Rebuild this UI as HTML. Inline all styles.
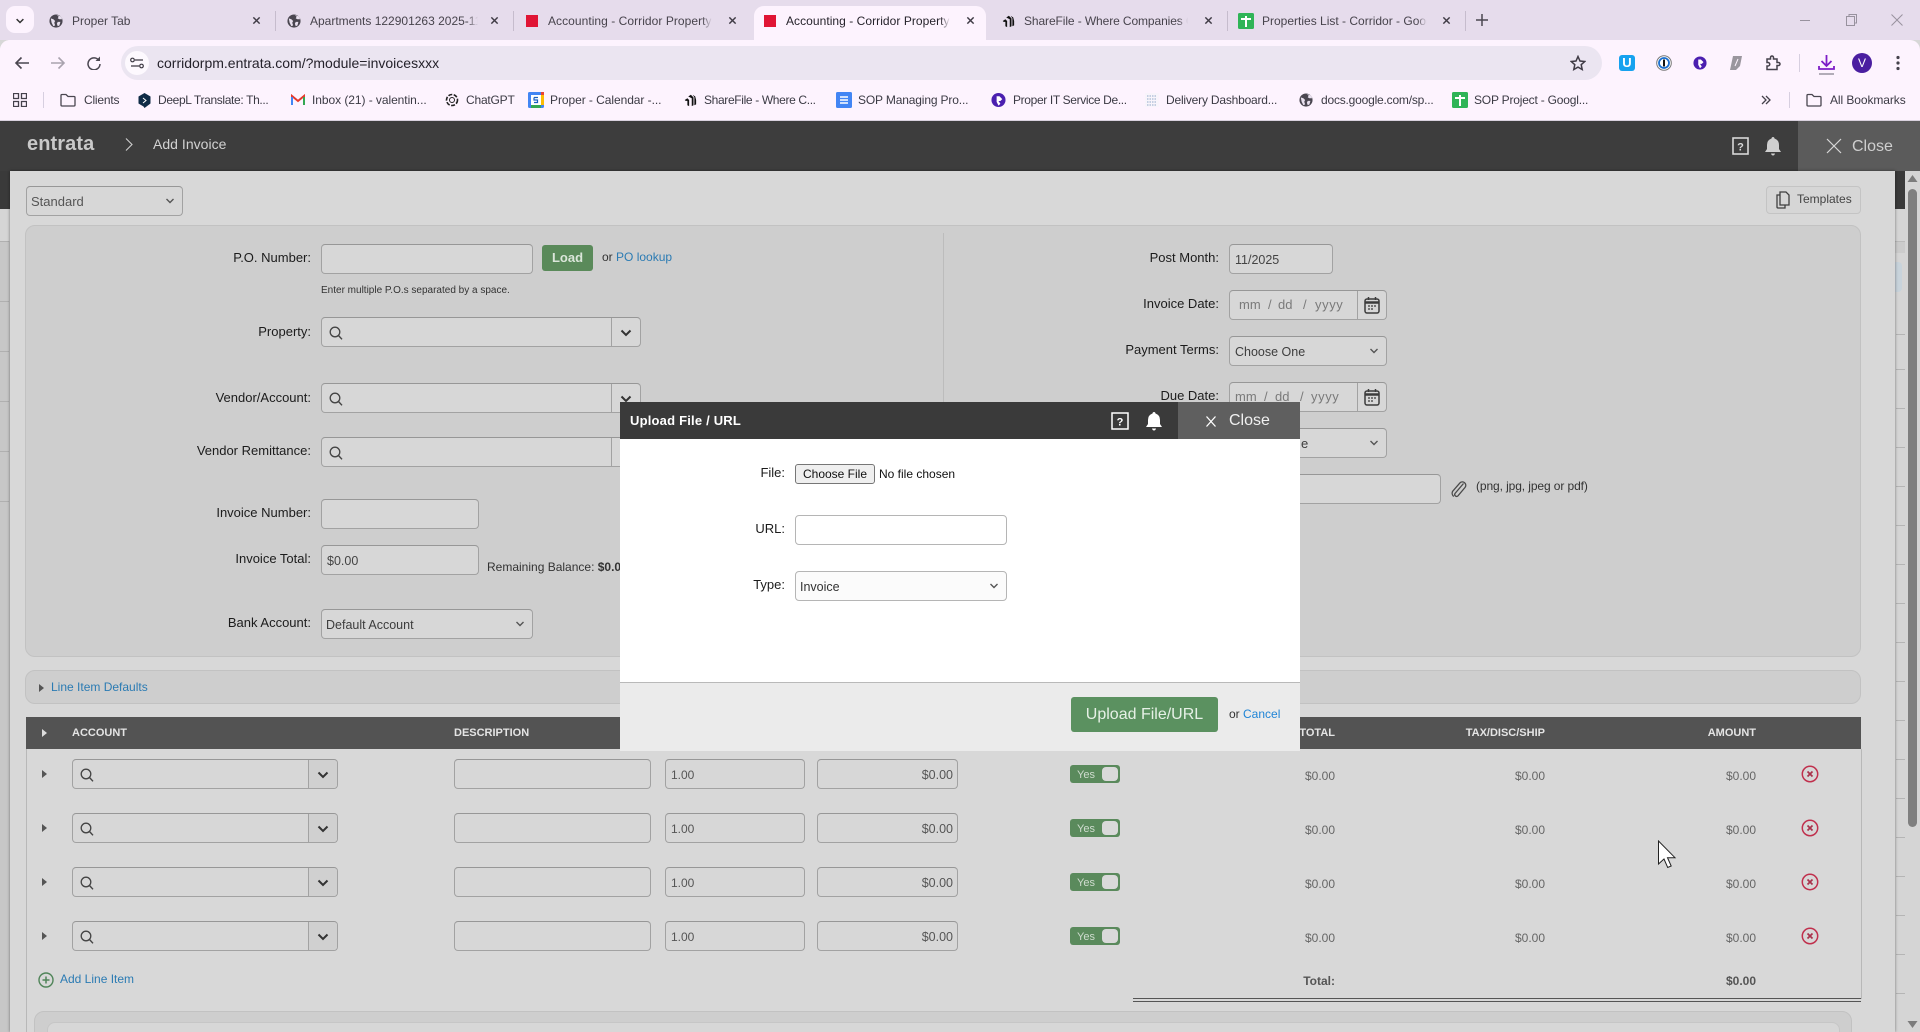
<!DOCTYPE html>
<html lang="en"><head><meta charset="utf-8"><title>Add Invoice</title>
<style>
html,body{margin:0;padding:0;width:1920px;height:1032px;overflow:hidden;background:#d7d7d7}
body{position:relative;font-family:"Liberation Sans",Arial,sans-serif;font-size:13px;color:#222}
div,span.a,svg.a{position:absolute}
.t{line-height:16px;white-space:nowrap}
.l{position:absolute;left:0;margin-top:1px;text-align:right;line-height:16px;color:#1c1c1c;white-space:nowrap}
.i{box-sizing:border-box;height:30px;background:#d7d7d7;border:1px solid #a2a2a2;border-top-color:#979797;border-radius:4px}
.v{position:absolute;line-height:30px;top:-1px;left:6px;color:#444;white-space:nowrap}
.s{background:#d2d2d2}
.tab{line-height:16px;top:12.500px;font-size:12px;color:#47434c;white-space:nowrap;overflow:hidden;-webkit-mask-image:linear-gradient(90deg,#000 94%,transparent)}
.bm{top:92px;line-height:16px;font-size:12px;color:#3b3a44;white-space:nowrap}
.sep{width:1px;background:#c6bccd;top:11px;height:20px}
.th{top:725px;line-height:16px;font-size:11px;font-weight:bold;color:#e4e4e4;white-space:nowrap}
.am{line-height:16px;font-size:12px;color:#666;text-align:right;white-space:nowrap}
.tg{left:1070px;width:50px;height:18px;background:#5a8a5c;border-radius:3px}
.tg b{position:absolute;left:32px;top:2px;width:16px;height:14px;background:#d9d9d9;border-radius:4px}
.tg span{position:absolute;left:7px;top:2px;line-height:16px;font-size:11px;color:#cfdccf}
.bl{left:1896px;width:9px;height:1px;background:#b5b5b5}
.bll{left:0;width:9px;height:1px;background:#b0b0b0}
.d{line-height:16px;white-space:nowrap;color:#7a7a7a;font-size:13px}
a{color:#2b7bb3;text-decoration:none}
</style></head><body>
<svg width="0" height="0" style="position:absolute"><defs>
<symbol id="glb" viewBox="0 0 16 16"><circle cx="8" cy="8" r="7.500" fill="#4a4650"/><path d="M2 5l3 1 2 2-1 2 1 3-2 1-2-4zM9 1l2 2-1 2 2 1 3 0-1-3zM10 9l3 0-1 4-2 1-1-3z" fill="#e8e0ee"/></symbol>
<symbol id="x" viewBox="0 0 10 10"><path d="M1.500 1.500l7 7M8.500 1.500l-7 7" stroke="#3f3b45" stroke-width="1.600" fill="none"/></symbol>
<symbol id="sh" viewBox="0 0 16 16"><path d="M2 8l3-2 2 2v7l-2-1V9L3 9zM6 4l3-2 3 3v9l-2 1V6L8 5zM11 2l3 2 1 4v5l-2 1V5z" fill="#111"/></symbol>
<symbol id="gs" viewBox="0 0 16 16"><rect width="16" height="16" rx="1.500" fill="#2fb457"/><path d="M3 6h10M8 3v11" stroke="#fff" stroke-width="2" fill="none"/></symbol>
<symbol id="gd" viewBox="0 0 16 16"><path d="M2 0h9l4 4v12H2z" fill="#4285f4"/><path d="M5 6h7M5 9h7M5 12h7" stroke="#fff" stroke-width="1.500"/></symbol>
<symbol id="pr" viewBox="0 0 16 16"><circle cx="8" cy="8" r="7.500" fill="#4b1fb0"/><path d="M6 4h3l3 3-2 2h-2l2 3-2 2-2-4z" fill="#fff"/></symbol>
<symbol id="fld" viewBox="0 0 16 14"><path d="M1 2.500q0-1 1-1h4l2 2h6q1 0 1 1v7.500q0 1-1 1H2q-1 0-1-1z" fill="none" stroke="#4a4650" stroke-width="1.300"/></symbol>
<symbol id="chs" viewBox="0 0 10 6"><path d="M1.500 1l3.500 3.500L8.500 1" fill="none" stroke="#555" stroke-width="1.400"/></symbol>
<symbol id="chb" viewBox="0 0 12 8"><path d="M1.500 1.500L6 6l4.500-4.500" fill="none" stroke="#333" stroke-width="2"/></symbol>
<symbol id="q" viewBox="0 0 14 14"><circle cx="6" cy="6" r="4.800" fill="none" stroke="#444" stroke-width="1.300"/><path d="M9.500 9.500l3.500 3.800" stroke="#444" stroke-width="1.400"/></symbol>
<symbol id="cal" viewBox="0 0 16 18"><rect x="1" y="3" width="14" height="14" rx="2" fill="none" stroke="#3c3c3c" stroke-width="1.500"/><path d="M1 6.500h14" stroke="#3c3c3c" stroke-width="2.500"/><path d="M4.500 1v3M11.500 1v3" stroke="#3c3c3c" stroke-width="1.500"/><path d="M4 10h2M7 10h2M10 10h2M4 13h2M7 13h2" stroke="#3c3c3c" stroke-width="1.300"/></symbol>
<symbol id="bell" viewBox="0 0 18 20"><path d="M9 1q1.300 0 1.500 1.500Q15 4 15 9v4l2 3H1l2-3V9q0-5 4.500-6.500Q7.700 1 9 1z" fill="currentColor"/><path d="M7 17.500h4q-.5 2-2 2t-2-2z" fill="currentColor"/></symbol>
<symbol id="tri" viewBox="0 0 5 8"><path d="M0 0l5 4-5 4z" fill="currentColor"/></symbol>
<symbol id="rx" viewBox="0 0 18 18"><circle cx="9" cy="9" r="7.700" fill="none" stroke="#c0304d" stroke-width="1.500"/><path d="M6.500 6.500l5 5M11.500 6.500l-5 5" stroke="#a8324b" stroke-width="1.700"/></symbol>
</defs></svg>

<!-- tab strip -->
<div style="left:0;top:0;width:1920px;height:40px;background:#e6dcec"></div>
<div style="left:6px;top:6px;width:28px;height:27px;background:#fdf3fe;border-radius:9px"></div>
<svg class="a" style="left:15px;top:18px" width="10" height="6"><use href="#chb"/></svg>
<svg class="a" style="left:49px;top:14px" width="14" height="14"><use href="#glb"/></svg>
<div class="tab" style="left:72px;width:100px">Proper Tab</div>
<svg class="a" style="left:252px;top:16px" width="9" height="9"><use href="#x"/></svg>
<div class="sep" style="left:275px"></div>
<svg class="a" style="left:287px;top:14px" width="14" height="14"><use href="#glb"/></svg>
<div class="tab" style="left:310px;width:168px">Apartments 122901263 2025-11 Invoice</div>
<svg class="a" style="left:490px;top:16px" width="9" height="9"><use href="#x"/></svg>
<div class="sep" style="left:513px"></div>
<div style="left:526px;top:15px;width:12px;height:12px;background:#e01535"></div>
<div class="tab" style="left:548px;width:164px;letter-spacing:.05px">Accounting - Corridor Property Management</div>
<svg class="a" style="left:728px;top:16px" width="9" height="9"><use href="#x"/></svg>
<div style="left:754px;top:6px;width:232px;height:36px;background:#fdf3fe;border-radius:10px 10px 0 0"></div>
<div style="left:764px;top:15px;width:12px;height:12px;background:#e01535"></div>
<div class="tab" style="left:786px;width:164px;color:#26232b;letter-spacing:.05px">Accounting - Corridor Property Management</div>
<svg class="a" style="left:966px;top:16px" width="9" height="9"><use href="#x"/></svg>
<svg class="a" style="left:1001px;top:14px" width="14" height="14"><use href="#sh"/></svg>
<div class="tab" style="left:1024px;width:164px;letter-spacing:-.1px">ShareFile - Where Companies Connect</div>
<svg class="a" style="left:1204px;top:16px" width="9" height="9"><use href="#x"/></svg>
<div class="sep" style="left:1227px"></div>
<svg class="a" style="left:1238px;top:13px" width="16" height="16"><use href="#gs"/></svg>
<div class="tab" style="left:1262px;width:165px">Properties List - Corridor - Google Sheets</div>
<svg class="a" style="left:1442px;top:16px" width="9" height="9"><use href="#x"/></svg>
<div class="sep" style="left:1465px"></div>
<svg class="a" style="left:1476px;top:14px" width="12" height="12"><path d="M6 0v12M0 6h12" stroke="#4a4650" stroke-width="1.500"/></svg>
<div style="left:1800px;top:20px;width:10px;height:1px;background:#98929e"></div>
<svg class="a" style="left:1846px;top:14px" width="11" height="12"><path d="M.5 2.500h8v9h-8zM3 2.500V.5h7.500v8.500H8.500" fill="none" stroke="#98929e"/></svg>
<svg class="a" style="left:1891px;top:14px" width="12" height="12"><path d="M.5.5l11 11M11.500.5l-11 11" stroke="#98929e"/></svg>

<!-- toolbar -->
<div style="left:0;top:40px;width:1920px;height:80px;background:#fdf3fe;border-radius:10px 10px 0 0"></div>
<div style="left:0;top:40px;width:754px;height:10px;background:#fdf3fe;border-radius:10px 0 0 0"></div>
<div style="left:0;top:120px;width:1920px;height:1px;background:#d9d1de"></div>
<svg class="a" style="left:14px;top:56px" width="16" height="14"><path d="M15 7H2M7.500 1.500L2 7l5.500 5.500" fill="none" stroke="#4a4650" stroke-width="1.600"/></svg>
<svg class="a" style="left:50px;top:56px" width="16" height="14"><path d="M1 7h13M8.500 1.500L14 7l-5.500 5.500" fill="none" stroke="#a9a3ae" stroke-width="1.600"/></svg>
<svg class="a" style="left:87px;top:56px" width="14" height="14"><path d="M12 4.500A6 6 0 1 0 13 8" fill="none" stroke="#4a4650" stroke-width="1.500"/><path d="M13 .5v4.500H8.500z" fill="#4a4650"/></svg>
<div style="left:121px;top:46px;width:1481px;height:34px;background:#ebe5f1;border-radius:17px"></div>
<div style="left:125px;top:51px;width:24px;height:24px;background:#fdf9fe;border-radius:12px"></div>
<svg class="a" style="left:130px;top:57px" width="14" height="12"><path d="M5 3h8M1 9h8" stroke="#3c3842" stroke-width="1.300"/><circle cx="2.500" cy="3" r="1.800" fill="none" stroke="#3c3842" stroke-width="1.200"/><circle cx="11.500" cy="9" r="1.800" fill="none" stroke="#3c3842" stroke-width="1.200"/></svg>
<div class="t" style="left:157px;top:55px;font-size:14px;color:#25222b">corridorpm.entrata.com/?module=invoicesxxx</div>
<svg class="a" style="left:1570px;top:55px" width="16" height="16"><path d="M8 1.500l2 4.500 4.800.5-3.600 3.200 1 4.800L8 12.100 3.800 14.500l1-4.800L1.200 6.500 6 6z" fill="none" stroke="#3f3b45" stroke-width="1.500"/></svg>
<div style="left:1619px;top:55px;width:16px;height:16px;background:#16a2ef;border-radius:3px"></div>
<div class="t" style="left:1619px;top:55px;width:16px;text-align:center;font-weight:bold;color:#fff;font-size:13px">U</div>
<svg class="a" style="left:1656px;top:55px" width="16" height="16"><circle cx="8" cy="8" r="7.300" fill="#fff" stroke="#777"/><circle cx="8" cy="8" r="5" fill="#fff" stroke="#1a6fd0" stroke-width="1.800"/><path d="M8 4.500v7" stroke="#111" stroke-width="2"/></svg>
<svg class="a" style="left:1693px;top:56px" width="14" height="14"><use href="#pr"/></svg>
<svg class="a" style="left:1729px;top:55px" width="14" height="16"><path d="M4 1h9l-2 10-4 4H1z" fill="#9a969e"/><path d="M9 4L6 11" stroke="#fdf3fe"/></svg>
<svg class="a" style="left:1765px;top:55px" width="16" height="16"><path d="M2 4h3.500V2.500a1.500 1.500 0 0 1 3 0V4H12v3.500h1.500a1.500 1.500 0 0 1 0 3H12V14.500H2v-3.500h1a1.500 1.500 0 0 0 0-3.500H2z" fill="none" stroke="#45414b" stroke-width="1.500"/></svg>
<div style="left:1799px;top:54px;width:1px;height:18px;background:#d7cfe0"></div>
<svg class="a" style="left:1818px;top:54px" width="17" height="22"><path d="M8.500 1v10M3.500 7l5 5 5-5" fill="none" stroke="#7d1dc7" stroke-width="1.800"/><path d="M1 12v3h15v-3" fill="none" stroke="#7d1dc7" stroke-width="1.800"/><path d="M1 20h15" stroke="#aaa4b0" stroke-width="1.800"/></svg>
<div style="left:1852px;top:53px;width:20px;height:20px;background:#4a1ea0;border-radius:50%"></div>
<div class="t" style="left:1852px;top:55px;width:20px;text-align:center;color:#fff;font-size:12px">V</div>
<svg class="a" style="left:1895px;top:55px" width="6" height="16"><circle cx="3" cy="2.500" r="1.600" fill="#45414b"/><circle cx="3" cy="8" r="1.600" fill="#45414b"/><circle cx="3" cy="13.500" r="1.600" fill="#45414b"/></svg>

<!-- bookmarks -->
<svg class="a" style="left:13px;top:93px" width="14" height="14"><path d="M.5.500h5v5h-5zM8.500.500h5v5h-5zM.5 8.500h5v5h-5zM8.500 8.500h5v5h-5z" fill="none" stroke="#45414b" stroke-width="1.300"/></svg>
<div style="left:43px;top:92px;width:1px;height:16px;background:#d7cfe0"></div>
<svg class="a" style="left:60px;top:93px" width="16" height="14"><use href="#fld"/></svg>
<div class="bm" style="left:84px;letter-spacing:-.2px">Clients</div>
<svg class="a" style="left:138px;top:93px" width="13" height="15"><path d="M6.500 0l6 3.500v7L6.500 15l-1-1.500L.5 10.500v-7z" fill="#0f2b46"/><path d="M5 5l3 2.500L5 10" stroke="#fff" fill="none"/></svg>
<div class="bm" style="left:158px;letter-spacing:-.35px">DeepL Translate: Th...</div>
<svg class="a" style="left:291px;top:94px" width="14" height="12"><path d="M1 11V2l6 5 6-5v9" fill="none" stroke="#e5392d" stroke-width="2"/><path d="M1 11V3" stroke="#4285f4" stroke-width="2"/><path d="M13 11V3" stroke="#34a853" stroke-width="2"/></svg>
<div class="bm" style="left:312px;letter-spacing:-.06px">Inbox (21) - valentin...</div>
<svg class="a" style="left:445px;top:93px" width="14" height="14"><circle cx="7" cy="7" r="5.500" fill="none" stroke="#222" stroke-width="1.600" stroke-dasharray="4 1.500"/><circle cx="7" cy="7" r="2.500" fill="none" stroke="#222"/></svg>
<div class="bm" style="left:466px;letter-spacing:-.2px">ChatGPT</div>
<svg class="a" style="left:528px;top:92px" width="16" height="16"><rect width="16" height="16" rx="1.500" fill="#4285f4"/><rect x="3" y="3" width="10" height="10" fill="#fff"/><path d="M13 0h3v3h-3z" fill="#ea4335"/><path d="M3 13h10v3H3z" fill="#34a853"/><path d="M13 3h3v10h-3z" fill="#fbbc04"/><path d="M6 5.500h4M6 5.500v2.500h3.500v2.500H6" fill="none" stroke="#1a5fc0" stroke-width="1.200"/></svg>
<div class="bm" style="left:550px;letter-spacing:-.06px">Proper - Calendar -...</div>
<svg class="a" style="left:683px;top:93px" width="14" height="14"><use href="#sh"/></svg>
<div class="bm" style="left:704px;letter-spacing:-.35px">ShareFile - Where C...</div>
<svg class="a" style="left:836px;top:92px" width="16" height="16"><rect width="16" height="16" rx="1.500" fill="#4285f4"/><path d="M4 5h8M4 8h8M4 11h8" stroke="#fff" stroke-width="1.500"/></svg>
<div class="bm" style="left:858px;letter-spacing:-.15px">SOP Managing Pro...</div>
<svg class="a" style="left:991px;top:92px" width="15" height="16"><use href="#pr"/></svg>
<div class="bm" style="left:1013px;letter-spacing:-.35px">Proper IT Service De...</div>
<svg class="a" style="left:1145px;top:93px" width="14" height="14"><rect width="14" height="14" fill="#f8f4fb"/><path d="M2 3h10M2 6h10M2 9h10M2 12h10" stroke="#8fa9c9" stroke-dasharray="1.500 1"/></svg>
<div class="bm" style="left:1166px;letter-spacing:-.2px">Delivery Dashboard...</div>
<svg class="a" style="left:1299px;top:93px" width="14" height="14"><use href="#glb"/></svg>
<div class="bm" style="left:1321px;letter-spacing:-.2px">docs.google.com/sp...</div>
<svg class="a" style="left:1452px;top:92px" width="16" height="16"><use href="#gs"/></svg>
<div class="bm" style="left:1474px;letter-spacing:-.2px">SOP Project - Googl...</div>
<svg class="a" style="left:1761px;top:95px" width="10" height="10"><path d="M1 1l4 4-4 4M5 1l4 4-4 4" fill="none" stroke="#45414b" stroke-width="1.300"/></svg>
<div style="left:1789px;top:92px;width:1px;height:16px;background:#d7cfe0"></div>
<svg class="a" style="left:1806px;top:93px" width="16" height="14"><use href="#fld"/></svg>
<div class="bm" style="left:1830px;letter-spacing:-.08px">All Bookmarks</div>

<!-- entrata header -->
<div style="left:0;top:121px;width:1920px;height:50px;background:#3d3d3d"></div>
<div class="t" style="left:27px;top:133px;font-size:20px;line-height:22px;font-weight:bold;letter-spacing:.1px;color:#c9c9c9">entrata</div>
<svg class="a" style="left:125px;top:138px" width="8" height="13"><path d="M1 .5l6 6-6 6" fill="none" stroke="#cfcfcf" stroke-width="1.100"/></svg>
<div class="t" style="left:153px;top:136px;font-size:14px;letter-spacing:.03px;color:#d2d2d2">Add Invoice</div>
<svg class="a" style="left:1732px;top:137px" width="17" height="18"><rect x="1" y="1" width="15" height="16" fill="none" stroke="#d8d8d8" stroke-width="1.600"/><text x="8.500" y="13.500" text-anchor="middle" font-family="Liberation Sans" font-size="11" font-weight="bold" fill="#d8d8d8">?</text></svg>
<svg class="a" style="left:1764px;top:136px;color:#cfcfcf" width="18" height="20"><use href="#bell"/></svg>
<div style="left:1798px;top:121px;width:122px;height:50px;background:#5b5b5b"></div>
<svg class="a" style="left:1826px;top:138px" width="16" height="16"><path d="M1 1l14 14M15 1L1 15" stroke="#d8d8d8" stroke-width="1.200"/></svg>
<div class="t" style="left:1852px;top:138px;font-size:16px;line-height:18px;color:#cfcfcf">Close</div>

<!-- behind page strips -->
<div style="left:0;top:171px;width:10px;height:861px;background:#c7c7c7"></div>
<div style="left:0;top:171px;width:10px;height:38px;background:#3a3a3a"></div>
<div style="left:0;top:209px;width:10px;height:32px;background:#d5d5d5"></div>
<div class="bll" style="top:241px"></div><div class="bll" style="top:301px"></div><div class="bll" style="top:351px"></div><div class="bll" style="top:401px"></div><div class="bll" style="top:451px"></div><div class="bll" style="top:501px"></div>
<div style="left:1895px;top:171px;width:25px;height:861px;background:#d5d5d5"></div>
<div style="left:1895px;top:171px;width:10px;height:38px;background:#3a3a3a"></div>
<div style="left:1895px;top:241px;width:10px;height:11px;background:#cbcbcb;border-top:1px solid #bbb"></div>
<div style="left:1895px;top:262px;width:7px;height:30px;background:#c8d3db;border-radius:0 4px 4px 0"></div>
<div class="bl" style="top:334px"></div><div class="bl" style="top:369px"></div><div class="bl" style="top:408px"></div><div class="bl" style="top:447px"></div><div class="bl" style="top:486px"></div><div class="bl" style="top:525px"></div><div class="bl" style="top:564px"></div><div class="bl" style="top:603px"></div><div class="bl" style="top:642px"></div><div class="bl" style="top:681px"></div><div class="bl" style="top:720px"></div><div class="bl" style="top:759px"></div><div class="bl" style="top:798px"></div><div class="bl" style="top:837px"></div><div class="bl" style="top:876px"></div><div class="bl" style="top:915px"></div><div class="bl" style="top:954px"></div><div class="bl" style="top:993px"></div>
<svg class="a" style="left:1907px;top:174px" width="11" height="9"><path d="M5.500 1L10.500 8H.5z" fill="#7c7c7c"/></svg>
<div style="left:1908px;top:189px;width:9px;height:638px;background:#7f7f7f;border-radius:5px"></div>
<svg class="a" style="left:1907px;top:1020px" width="11" height="9"><path d="M5.500 8L.5 1h10z" fill="#7c7c7c"/></svg>

<!-- page -->
<div style="left:10px;top:171px;width:1885px;height:861px;background:#d8d8d8;box-shadow:0 0 3px rgba(0,0,0,.45)"></div>
<div class="i" style="left:26px;top:186px;width:157px;background:#d7d7d7"><span class="v" style="left:4px;top:0;color:#555">Standard</span></div>
<svg class="a" style="left:165px;top:198px" width="10" height="6"><use href="#chs"/></svg>
<div class="i" style="left:1766px;top:186px;width:95px;height:28px;border-color:#c4c4c4;background:#d6d6d6"></div>
<svg class="a" style="left:1775px;top:191px" width="15" height="18"><path d="M5 1h6l3 3v10H5z" fill="none" stroke="#3f3f3f" stroke-width="1.300"/><path d="M5 4H2v12q0 1 1 1h7v-3" fill="none" stroke="#3f3f3f" stroke-width="1.300"/></svg>
<div class="t" style="left:1797px;top:191px;font-size:12px;color:#444">Templates</div>

<!-- form panel -->
<div style="left:25px;top:225px;width:1836px;height:432px;box-sizing:border-box;background:#cecece;border:1px solid #c2c2c2;border-radius:10px"></div>
<div style="left:943px;top:233px;width:1px;height:415px;background:#bcbcbc"></div>

<div class="l" style="width:311px;top:249px">P.O. Number:</div>
<div class="i a" style="left:321px;top:244px;width:212px"></div>
<div style="left:542px;top:245px;width:51px;height:26px;background:#5a8a5a;border-radius:3px;text-align:center;line-height:26px;font-weight:bold;font-size:13px;color:#dbe6da">Load</div>
<div class="t" style="left:602px;top:249px;font-size:12px;color:#333">or <a>PO lookup</a></div>
<div class="t" style="left:321px;top:283px;font-size:10px;color:#333">Enter multiple P.O.s separated by a space.</div>

<div class="l" style="width:311px;top:323px">Property:</div>
<div class="i" style="left:321px;top:317px;width:320px"></div>
<div style="left:611px;top:318px;width:1px;height:28px;background:#a2a2a2"></div>
<svg class="a" style="left:329px;top:326px" width="14" height="14"><use href="#q"/></svg>
<svg class="a" style="left:620px;top:329px" width="12" height="8"><use href="#chb"/></svg>

<div class="l" style="width:311px;top:389px">Vendor/Account:</div>
<div class="i" style="left:321px;top:383px;width:320px"></div>
<div style="left:611px;top:384px;width:1px;height:28px;background:#a2a2a2"></div>
<svg class="a" style="left:329px;top:392px" width="14" height="14"><use href="#q"/></svg>
<svg class="a" style="left:620px;top:395px" width="12" height="8"><use href="#chb"/></svg>

<div class="l" style="width:311px;top:442px">Vendor Remittance:</div>
<div class="i" style="left:321px;top:437px;width:320px"></div>
<div style="left:611px;top:438px;width:1px;height:28px;background:#a2a2a2"></div>
<svg class="a" style="left:329px;top:446px" width="14" height="14"><use href="#q"/></svg>

<div class="l" style="width:311px;top:504px">Invoice Number:</div>
<div class="i" style="left:321px;top:499px;width:158px"></div>
<div class="l" style="width:311px;top:550px">Invoice Total:</div>
<div class="i" style="left:321px;top:545px;width:158px"><span class="v" style="left:5px;top:0;color:#444;font-size:12.500px">$0.00</span></div>
<div class="t" style="left:487px;top:559px;font-size:12px;color:#333">Remaining Balance: <b>$0.00</b></div>
<div class="l" style="width:311px;top:614px">Bank Account:</div>
<div class="i" style="left:321px;top:609px;width:212px"><span class="v" style="left:4px;top:0;color:#3d3d3d;font-size:12.500px">Default Account</span></div>
<svg class="a" style="left:515px;top:621px" width="10" height="6"><use href="#chs"/></svg>

<div class="l" style="width:1219px;top:249px">Post Month:</div>
<div class="i" style="left:1229px;top:244px;width:104px"><span class="v" style="left:5px;top:0;font-size:12.500px">11/2025</span></div>
<div class="l" style="width:1219px;top:295px">Invoice Date:</div>
<div class="i" style="left:1229px;top:290px;width:158px"></div>
<div style="left:1357px;top:291px;width:1px;height:28px;background:#a2a2a2"></div>
<div class="d" style="left:1239px;top:297px">mm</div><div class="d" style="left:1268px;top:297px">/</div><div class="d" style="left:1278px;top:297px">dd</div><div class="d" style="left:1303px;top:297px">/</div><div class="d" style="left:1315px;top:297px;letter-spacing:.6px">yyyy</div>
<svg class="a" style="left:1364px;top:296px" width="16" height="18"><use href="#cal"/></svg>
<div class="l" style="width:1219px;top:341px">Payment Terms:</div>
<div class="i" style="left:1229px;top:336px;width:158px"><span class="v" style="left:5px;top:0;color:#3d3d3d;font-size:12.500px">Choose One</span></div>
<svg class="a" style="left:1369px;top:348px" width="10" height="6"><use href="#chs"/></svg>
<div class="l" style="width:1219px;top:387px">Due Date:</div>
<div class="i" style="left:1229px;top:382px;width:158px"></div>
<div style="left:1357px;top:383px;width:1px;height:28px;background:#a2a2a2"></div>
<div class="d" style="left:1235px;top:389px">mm</div><div class="d" style="left:1264px;top:389px">/</div><div class="d" style="left:1275px;top:389px">dd</div><div class="d" style="left:1300px;top:389px">/</div><div class="d" style="left:1311px;top:389px;letter-spacing:.6px">yyyy</div>
<svg class="a" style="left:1364px;top:388px" width="16" height="18"><use href="#cal"/></svg>
<div class="i" style="left:1229px;top:428px;width:158px"></div>
<div class="t" style="left:1301px;top:436px;color:#3d3d3d">e</div>
<svg class="a" style="left:1369px;top:440px" width="10" height="6"><use href="#chs"/></svg>
<div class="i" style="left:1229px;top:474px;width:212px"></div>
<svg class="a" style="left:1450px;top:480px" width="17" height="18"><path d="M13.500 3.500L5 13.500a1.900 1.900 0 0 0 3 2.300L15 7.500a3.400 3.400 0 0 0-5.200-4.400L2.500 11.500a4.200 4.200 0 0 0 1.300 5" fill="none" stroke="#4a4a4a" stroke-width="1.300"/></svg>
<div class="t" style="left:1476px;top:478px;font-size:12px;letter-spacing:-.1px;color:#333">(png, jpg, jpeg or pdf)</div>

<!-- line item defaults -->
<div style="left:25px;top:670px;width:1836px;height:34px;box-sizing:border-box;background:#cecece;border:1px solid #c2c2c2;border-radius:10px"></div>
<svg class="a" style="left:39px;top:684px;color:#555" width="5" height="8"><use href="#tri"/></svg>
<div class="t" style="left:51px;top:679px;font-size:12px"><a>Line Item Defaults</a></div>

<!-- table -->
<div style="left:26px;top:749px;width:1px;height:283px;background:#b8b8b8"></div>
<div style="left:1861px;top:749px;width:1px;height:250px;background:#b8b8b8"></div>
<div style="left:26px;top:717px;width:1835px;height:32px;background:#535353"></div>
<svg class="a" style="left:42px;top:729px;color:#ddd" width="5" height="8"><use href="#tri"/></svg>
<div class="th" style="left:72px">ACCOUNT</div>
<div class="th" style="left:454px">DESCRIPTION</div>
<div class="th" style="left:0;width:1335px;text-align:right">TOTAL</div>
<div class="th" style="left:0;width:1545px;text-align:right">TAX/DISC/SHIP</div>
<div class="th" style="left:0;width:1756px;text-align:right">AMOUNT</div>

<!-- row 1 -->
<svg class="a" style="left:42px;top:770px;color:#555" width="5" height="8"><use href="#tri"/></svg>
<div class="i" style="left:72px;top:759px;width:266px"></div><div style="left:308px;top:760px;width:29px;height:28px;box-sizing:border-box;background:#d0d0d0;border-left:1px solid #a2a2a2;border-radius:0 3px 3px 0"></div>
<svg class="a" style="left:80px;top:768px" width="14" height="14"><use href="#q"/></svg><svg class="a" style="left:317px;top:771px" width="12" height="8"><use href="#chb"/></svg>
<div class="i" style="left:454px;top:759px;width:197px"></div>
<div class="i" style="left:665px;top:759px;width:140px"><span class="v" style="left:5px;top:0;color:#555;font-size:12px">1.00</span></div>
<div class="i" style="left:817px;top:759px;width:141px;text-align:right"><span class="v" style="left:auto;right:4px;top:0;color:#555;font-size:12.500px">$0.00</span></div>
<div class="tg" style="top:765px"><span>Yes</span><b></b></div>
<div class="am" style="left:0;width:1335px;top:768px">$0.00</div><div class="am" style="left:0;width:1545px;top:768px">$0.00</div><div class="am" style="left:0;width:1756px;top:768px">$0.00</div>
<svg class="a" style="left:1801px;top:765px" width="18" height="18"><use href="#rx"/></svg>
<!-- row 2 -->
<svg class="a" style="left:42px;top:824px;color:#555" width="5" height="8"><use href="#tri"/></svg>
<div class="i" style="left:72px;top:813px;width:266px"></div><div style="left:308px;top:814px;width:29px;height:28px;box-sizing:border-box;background:#d0d0d0;border-left:1px solid #a2a2a2;border-radius:0 3px 3px 0"></div>
<svg class="a" style="left:80px;top:822px" width="14" height="14"><use href="#q"/></svg><svg class="a" style="left:317px;top:825px" width="12" height="8"><use href="#chb"/></svg>
<div class="i" style="left:454px;top:813px;width:197px"></div>
<div class="i" style="left:665px;top:813px;width:140px"><span class="v" style="left:5px;top:0;color:#555;font-size:12px">1.00</span></div>
<div class="i" style="left:817px;top:813px;width:141px"><span class="v" style="left:auto;right:4px;top:0;color:#555;font-size:12.500px">$0.00</span></div>
<div class="tg" style="top:819px"><span>Yes</span><b></b></div>
<div class="am" style="left:0;width:1335px;top:822px">$0.00</div><div class="am" style="left:0;width:1545px;top:822px">$0.00</div><div class="am" style="left:0;width:1756px;top:822px">$0.00</div>
<svg class="a" style="left:1801px;top:819px" width="18" height="18"><use href="#rx"/></svg>
<!-- row 3 -->
<svg class="a" style="left:42px;top:878px;color:#555" width="5" height="8"><use href="#tri"/></svg>
<div class="i" style="left:72px;top:867px;width:266px"></div><div style="left:308px;top:868px;width:29px;height:28px;box-sizing:border-box;background:#d0d0d0;border-left:1px solid #a2a2a2;border-radius:0 3px 3px 0"></div>
<svg class="a" style="left:80px;top:876px" width="14" height="14"><use href="#q"/></svg><svg class="a" style="left:317px;top:879px" width="12" height="8"><use href="#chb"/></svg>
<div class="i" style="left:454px;top:867px;width:197px"></div>
<div class="i" style="left:665px;top:867px;width:140px"><span class="v" style="left:5px;top:0;color:#555;font-size:12px">1.00</span></div>
<div class="i" style="left:817px;top:867px;width:141px"><span class="v" style="left:auto;right:4px;top:0;color:#555;font-size:12.500px">$0.00</span></div>
<div class="tg" style="top:873px"><span>Yes</span><b></b></div>
<div class="am" style="left:0;width:1335px;top:876px">$0.00</div><div class="am" style="left:0;width:1545px;top:876px">$0.00</div><div class="am" style="left:0;width:1756px;top:876px">$0.00</div>
<svg class="a" style="left:1801px;top:873px" width="18" height="18"><use href="#rx"/></svg>
<!-- row 4 -->
<svg class="a" style="left:42px;top:932px;color:#555" width="5" height="8"><use href="#tri"/></svg>
<div class="i" style="left:72px;top:921px;width:266px"></div><div style="left:308px;top:922px;width:29px;height:28px;box-sizing:border-box;background:#d0d0d0;border-left:1px solid #a2a2a2;border-radius:0 3px 3px 0"></div>
<svg class="a" style="left:80px;top:930px" width="14" height="14"><use href="#q"/></svg><svg class="a" style="left:317px;top:933px" width="12" height="8"><use href="#chb"/></svg>
<div class="i" style="left:454px;top:921px;width:197px"></div>
<div class="i" style="left:665px;top:921px;width:140px"><span class="v" style="left:5px;top:0;color:#555;font-size:12px">1.00</span></div>
<div class="i" style="left:817px;top:921px;width:141px"><span class="v" style="left:auto;right:4px;top:0;color:#555;font-size:12.500px">$0.00</span></div>
<div class="tg" style="top:927px"><span>Yes</span><b></b></div>
<div class="am" style="left:0;width:1335px;top:930px">$0.00</div><div class="am" style="left:0;width:1545px;top:930px">$0.00</div><div class="am" style="left:0;width:1756px;top:930px">$0.00</div>
<svg class="a" style="left:1801px;top:927px" width="18" height="18"><use href="#rx"/></svg>

<svg class="a" style="left:38px;top:972px" width="16" height="16"><circle cx="8" cy="8" r="7" fill="none" stroke="#4f8458" stroke-width="1.400"/><path d="M8 4.500v7M4.500 8h7" stroke="#4f8458" stroke-width="1.500"/></svg>
<div class="t" style="left:60px;top:971px;font-size:12px"><a>Add Line Item</a></div>
<div class="am" style="left:0;width:1335px;top:973px;font-weight:bold;color:#555">Total:</div>
<div class="am" style="left:0;width:1756px;top:973px;font-weight:bold;color:#555">$0.00</div>
<div style="left:1133px;top:998px;width:728px;height:1px;background:#555;border-bottom:2px solid #d8d8d8"></div>
<div style="left:1133px;top:1001px;width:728px;height:1px;background:#555"></div>

<div style="left:34px;top:1011px;width:1818px;height:30px;box-sizing:border-box;background:#cecece;border:1px solid #c2c2c2;border-radius:10px"></div>
<div style="left:47px;top:1022px;width:1793px;height:20px;box-sizing:border-box;background:#d7d7d7;border:1px solid #c6c6c6;border-radius:8px"></div>

<!-- modal -->
<div style="left:620px;top:402px;width:680px;height:349px;background:#fff"></div>
<div style="left:620px;top:402px;width:680px;height:37px;background:#3a3a3a"></div>
<div class="t" style="left:630px;top:413px;font-size:13px;font-weight:bold;letter-spacing:.2px;color:#fff">Upload File / URL</div>
<svg class="a" style="left:1111px;top:412px" width="18" height="18"><rect x="1" y="1" width="16" height="16" fill="none" stroke="#fff" stroke-width="1.500"/><text x="9" y="13.500" text-anchor="middle" font-family="Liberation Sans" font-size="11" font-weight="bold" fill="#fff">?</text></svg>
<svg class="a" style="left:1145px;top:411px;color:#fff" width="18" height="20"><use href="#bell"/></svg>
<div style="left:1178px;top:402px;width:122px;height:37px;background:#5f5f5f"></div>
<svg class="a" style="left:1206px;top:416px" width="10" height="11"><path d="M.5.500l9 10M9.500.500l-9 10" stroke="#fff" stroke-width="1.300"/></svg>
<div class="t" style="left:1229px;top:412px;font-size:16px;line-height:18px;color:#f0f0f0">Close</div>

<div class="l" style="width:785px;top:464px">File:</div>
<div style="left:795px;top:464px;width:80px;height:20px;box-sizing:border-box;background:#efefef;border:1px solid #767676;border-radius:3px;text-align:center;line-height:18px;font-size:12px;color:#111">Choose File</div>
<div class="t" style="left:879px;top:466px;font-size:12px;color:#111">No file chosen</div>
<div class="l" style="width:785px;top:520px">URL:</div>
<div class="i" style="left:795px;top:515px;width:212px;background:#fff;border-color:#b5b5b5"></div>
<div class="l" style="width:785px;top:576px">Type:</div>
<div class="i" style="left:795px;top:571px;width:212px;background:#fbfbfb;border-color:#b5b5b5"><span class="v" style="left:4px;top:0;color:#333;font-size:12.500px">Invoice</span></div>
<svg class="a" style="left:989px;top:583px" width="10" height="6"><use href="#chs"/></svg>

<div style="left:620px;top:682px;width:680px;height:69px;box-sizing:border-box;background:#ebebeb;border-top:1px solid #b9b9b9"></div>
<div style="left:1071px;top:697px;width:147px;height:35px;background:#5b9160;border-radius:3px;text-align:center;line-height:36px;font-size:16px;color:#e6f0e6">Upload File/URL</div>
<div class="t" style="left:1229px;top:706px;font-size:12px;color:#333">or <a style="color:#1f84d6">Cancel</a></div>

<!-- cursor -->
<svg class="a" style="left:1657px;top:840px" width="20" height="29"><path d="M1.500 1v23l5.500-5 3.700 8.500 3.500-1.500-3.700-8.300h7.500z" fill="#fff" stroke="#222" stroke-width="1"/></svg>
</body></html>
